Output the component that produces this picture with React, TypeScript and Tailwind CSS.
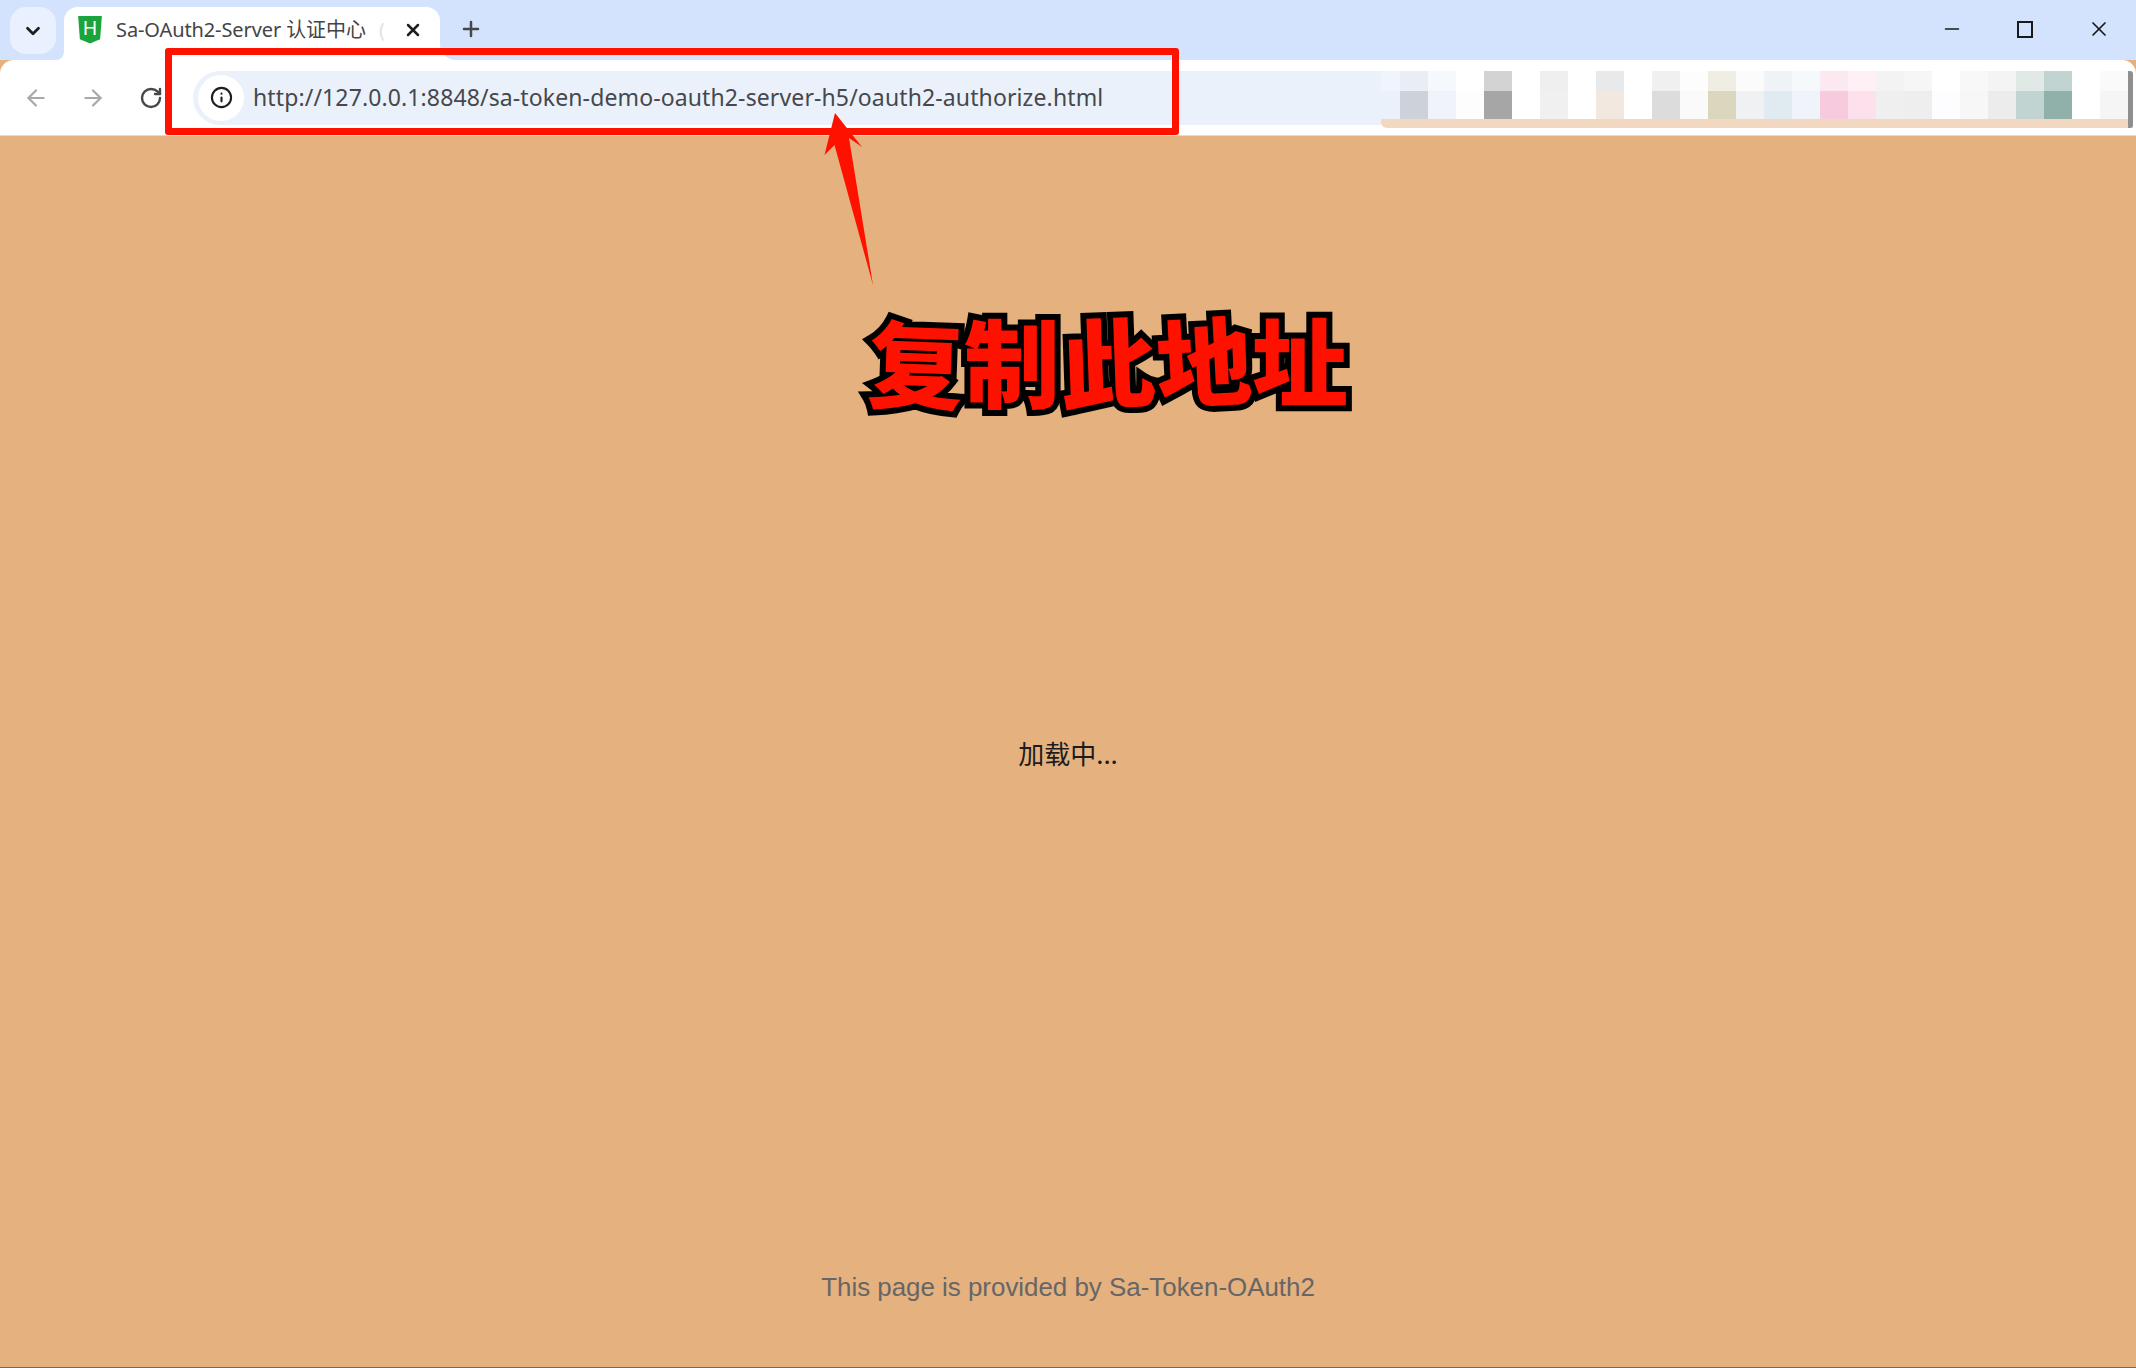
import { ArrowLeft, ArrowRight, ChevronDown, Info, Minus, Plus, RotateCw, X } from "lucide-react"

const topCells = [
  "bg-[#f0f4fc]", "bg-[#e9edf5]", "bg-[#f5f8fd]", "bg-[#ffffff]", "bg-[#d3d3d3]", "bg-[#ffffff]", "bg-[#efefef]",
  "bg-[#ffffff]", "bg-[#e8e9eb]", "bg-[#ffffff]", "bg-[#f0f0f0]", "bg-[#fdfdfd]", "bg-[#f0ede3]", "bg-[#fbfbfb]",
  "bg-[#eff3f7]", "bg-[#f6f9fc]", "bg-[#fce8f0]", "bg-[#fff0f5]", "bg-[#f3f3f3]", "bg-[#f6f6f6]", "bg-[#ffffff]",
  "bg-[#f8f8f8]", "bg-[#f4f4f4]", "bg-[#e0e9e6]", "bg-[#c2d4d1]", "bg-[#ffffff]", "bg-[#fafafa]",
]

const bottomCells = [
  "bg-[#ebf1fb]", "bg-[#cdd1da]", "bg-[#f0f3fc]", "bg-[#fdfdfd]", "bg-[#a6a6a6]", "bg-[#ffffff]", "bg-[#f0f0f0]",
  "bg-[#ffffff]", "bg-[#f2e8df]", "bg-[#ffffff]", "bg-[#dcdcdc]", "bg-[#fafafa]", "bg-[#dbd6be]", "bg-[#f0f1f3]",
  "bg-[#e0eaf1]", "bg-[#f0f3f9]", "bg-[#f7cadd]", "bg-[#fce0eb]", "bg-[#efefef]", "bg-[#eeeeee]", "bg-[#fdfdff]",
  "bg-[#f7f7f7]", "bg-[#ececec]", "bg-[#c2d4d1]", "bg-[#90b1aa]", "bg-[#ffffff]", "bg-[#f5f5f5]",
]

const stickers = [
  { ch: "复", cls: "rotate-[2deg] translate-y-[1px]" },
  { ch: "制", cls: "translate-y-[-1px]" },
  { ch: "此", cls: "rotate-[-2deg] translate-y-[-1px]" },
  { ch: "地", cls: "rotate-[-3deg] translate-y-[-2px]" },
  { ch: "址", cls: "translate-y-[-2px]" },
]

const Favicon = () => (
  <svg width="24" height="28" viewBox="0 0 22 26" className="shrink-0">
    <path d="M0 0H22L20.4 21.5L11 25.5L1.6 21.5Z" fill="#1aa53c" />
    <text x="11" y="18" textAnchor="middle" fontSize="18" fontFamily="'Liberation Sans', sans-serif" fill="#ffffff">
      H
    </text>
  </svg>
)

const TabStrip = () => (
  <div className="h-[60px] shrink-0 bg-[#d3e3fd] flex items-start pt-[7px] pl-[10px]">
    <div className="w-[46px] h-[47px] rounded-[16px] bg-[#e9f0fe] flex items-center justify-center">
      <ChevronDown size={22} strokeWidth={3} className="text-[#1f1f1f]" />
    </div>
    <div className="relative ml-[8px] w-[376px] h-[53px] bg-white rounded-t-[14px] flex items-center pl-[14px] pb-[7px]">
      <Favicon />
      <span className="ml-[14px] w-[291px] overflow-hidden whitespace-nowrap text-[20px] text-[#444444] font-['Noto_Sans','Noto_Sans_CJK_SC',sans-serif] tracking-[-0.1px]">
        Sa-OAuth2-Server 认证中心 <span className="ml-[8px] text-[#e2e2e2]">(</span>
      </span>
      <X size={20} strokeWidth={3} className="ml-[-4px] text-[#1f1f1f]" />
      {/* concave corners where the tab meets the toolbar */}
      <div className="absolute right-full bottom-0 w-[8px] h-[8px] bg-white">
        <div className="w-full h-full bg-[#d3e3fd] rounded-br-[8px]" />
      </div>
      <div className="absolute left-full bottom-0 w-[16px] h-[16px] bg-white">
        <div className="w-full h-full bg-[#d3e3fd] rounded-bl-[16px]" />
      </div>
    </div>
    <Plus size={24} strokeWidth={2.5} className="ml-[19px] mt-[10px] text-[#444746]" />
    <div className="ml-auto flex items-center h-[44px] pr-[25px] text-[#1a1a1a]">
      <Minus size={22} strokeWidth={1.8} />
      <div className="ml-[54px] w-[16px] h-[17px] border-2 border-[#1a1a1a]" />
      <X size={24} strokeWidth={1.7} className="ml-[54px]" />
    </div>
  </div>
)

const Toolbar = () => (
  <div className="relative h-[76px] shrink-0 bg-white rounded-t-[14px] border-b border-[#dadce0] flex items-center">
    <ArrowLeft size={26} strokeWidth={2} className="ml-[23px] text-[#a8a8a8]" />
    <ArrowRight size={26} strokeWidth={2} className="ml-[31px] text-[#a8a8a8]" />
    <RotateCw size={24} strokeWidth={2.4} className="ml-[33px] text-[#474747]" />
    <div className="ml-[30px] mr-[8px] h-[54px] flex-1 rounded-full bg-[#ebf1fb] flex items-center pl-[5px]">
      <div className="w-[46px] h-[46px] rounded-full bg-white flex items-center justify-center">
        <Info size={23} strokeWidth={2.2} className="text-[#1f1f1f]" />
      </div>
      <span className="ml-[9px] text-[23px] tracking-[0.12px] text-[#45484c] whitespace-nowrap font-['Noto_Sans',sans-serif]">
        http://127.0.0.1:8848/sa-token-demo-oauth2-server-h5/oauth2-authorize.html
      </span>
    </div>
    {/* pixelated redaction over the bookmarks */}
    <div className="absolute left-[1381px] top-[11px] w-[752px] h-[57px] flex flex-col">
      <div className="h-[20px] flex">
        {topCells.map((c, i) => (
          <div key={i} className={`${i === 0 ? "w-[19px]" : "w-[28px]"} ${c}`} />
        ))}
      </div>
      <div className="h-[28px] flex">
        {bottomCells.map((c, i) => (
          <div key={i} className={`${i === 0 ? "w-[19px]" : "w-[28px]"} ${c}`} />
        ))}
      </div>
      <div className="h-[9px] bg-[#f2d8c0] rounded-bl-[6px]" />
      <div className="absolute right-0 top-0 bottom-0 w-[5px] bg-[#8f8f8f] rounded-r-[3px]" />
    </div>
  </div>
)

const Annotations = () => (
  <>
    <div className="absolute left-[165px] top-[48px] w-[1014px] h-[87px] border-[7px] border-[#ff1100] rounded-[3px]" />
    <svg width="60" height="180" viewBox="0 0 60 180" className="absolute left-[820px] top-[110px]">
      <path d="M15 3L42 37L29 28L53 175L14.5 35L4.5 45Z" fill="#ff1100" />
    </svg>
    <div className="absolute left-[868px] top-[295px] flex text-[96px] leading-[130px] font-black text-[#ff1100] font-['Noto_Sans_CJK_SC',sans-serif] [-webkit-text-stroke:12px_#000000] [paint-order:stroke_fill]">
      {stickers.map(s => (
        <span key={s.ch} className={`inline-block ${s.cls}`}>
          {s.ch}
        </span>
      ))}
    </div>
  </>
)

export default function App() {
  return (
    <div className="relative w-full h-screen overflow-hidden flex flex-col bg-[#e4b17f] border-b border-[#6b6b6b]">
      <TabStrip />
      <Toolbar />
      <main className="flex-1 grid grid-rows-[1fr_auto_1fr] justify-items-center">
        <div />
        <p className="mt-[2px] text-[26px] leading-[36px] text-[#1c1c1c] font-['Noto_Sans_CJK_SC',sans-serif]">
          加载中...
        </p>
        <div className="self-end pb-[62px] text-[25.9px] leading-[36px] text-[#666666] font-['Liberation_Sans',sans-serif]">
          This page is provided by Sa-Token-OAuth2
        </div>
      </main>
      <Annotations />
    </div>
  )
}
